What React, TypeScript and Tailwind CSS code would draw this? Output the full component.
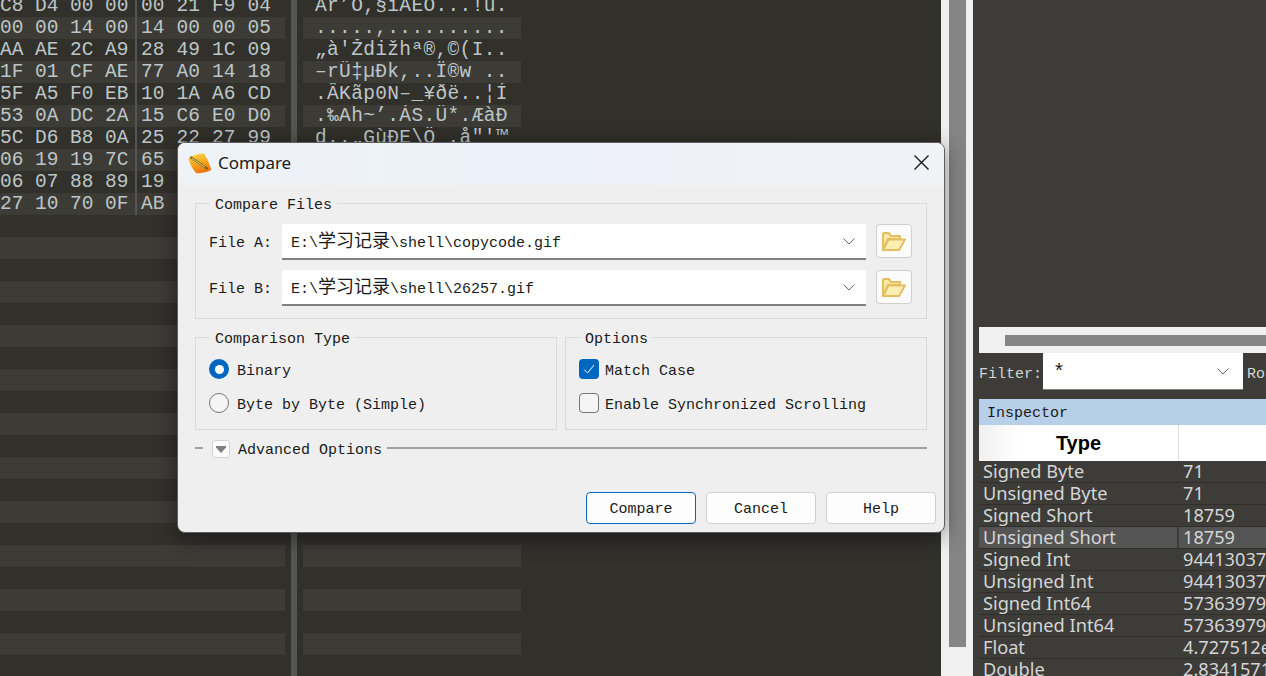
const hexRows = [
  ["C8", "D4", "00", "00", "00", "21", "F9", "04"],
  ["00", "00", "14", "00", "14", "00", "00", "05"],
  ["AA", "AE", "2C", "A9", "28", "49", "1C", "09"],
  ["1F", "01", "CF", "AE", "77", "A0", "14", "18"],
  ["5F", "A5", "F0", "EB", "10", "1A", "A6", "CD"],
  ["53", "0A", "DC", "2A", "15", "C6", "E0", "D0"],
  ["5C", "D6", "B8", "0A", "25", "22", "27", "99"],
  ["06", "19", "19", "7C", "65"],
  ["06", "07", "88", "89", "19"],
  ["27", "10", "70", "0F", "AB"],
];

const asciiRows = [
  "Ar’O,§iAEO...!ú.",
  ".....,..........",
  "„à'Ždižhª®,©(I..",
  "–rÜ‡µÐk,..Ï®w ..",
  ".ÂKãp0N–_¥ðë..¦Í",
  ".‰Ah~’.ÁS.Ü*.ÆàÐ",
  "d..„GùÐE\\Ö .å\"'™",
];

const inspectorRows = [
  ["Signed Byte", "71"],
  ["Unsigned Byte", "71"],
  ["Signed Short", "18759"],
  ["Unsigned Short", "18759"],
  ["Signed Int", "94413037"],
  ["Unsigned Int", "94413037"],
  ["Signed Int64", "57363979"],
  ["Unsigned Int64", "57363979"],
  ["Float", "4.727512e"],
  ["Double", "2.8341571"],
];

const mono = "font-['Liberation_Mono','Noto_Sans_CJK_SC',monospace]";
const rowCount = 32;

function Chevron() {
  return (
    <svg width="12" height="7" viewBox="0 0 12 7" fill="none">
      <path d="M0.5 0.5 L6 6 L11.5 0.5" stroke="#666" strokeWidth="1" />
    </svg>
  );
}

function FolderIcon() {
  return (
    <svg width="24" height="19" viewBox="0 0 24 19" fill="none">
      <path d="M1 18 V2 Q1 1 2 1 H7 L9 4 H18 V7 H6 L1 18 Z" fill="#f8e8a4" stroke="#e4bf62" strokeWidth="2" strokeLinejoin="round" />
      <path d="M1 18 L6.5 7.5 H23 L17 18 Z" fill="#fbefb4" stroke="#e4bf62" strokeWidth="2" strokeLinejoin="round" />
    </svg>
  );
}

function AppIcon() {
  return (
    <svg width="24" height="21" viewBox="0 0 24 21">
      <defs>
        <linearGradient id="leaf" x1="0.3" y1="0" x2="0.6" y2="1">
          <stop offset="0" stopColor="#fcd34a" />
          <stop offset="0.5" stopColor="#f9a51c" />
          <stop offset="1" stopColor="#ec6f10" />
        </linearGradient>
      </defs>
      <path d="M0.5 5.5 Q8 0 16 0.5 Q21 8 23.5 17 Q16 21 8 20 Q2 13 0.5 5.5 Z" fill="url(#leaf)" />
      <path d="M3 4.5 L19 15.5" stroke="#7a6420" strokeWidth="2.2" strokeLinecap="round" />
      <path d="M3.5 5 L17 14.2" stroke="#f8e88a" strokeWidth="0.9" />
    </svg>
  );
}

function FileRow({ label, prefix, suffix }: { label: string; prefix: string; suffix: string }) {
  return (
    <div className="flex items-start h-[36px]">
      <span className="w-[86px] h-[36px] pl-[13px] pt-[2px] leading-[36px] text-[15px] text-[#1a1a1a] whitespace-pre">{label}</span>
      <div className="w-[584px] h-[36px] bg-white border-b-2 border-[#808080] flex items-center pl-[9px] pr-[11px] rounded-t-[2px]">
        <span className="flex-1 pt-[6px] text-[15px] text-[#1a1a1a] whitespace-pre">
          {prefix}
          <span className="text-[18px] leading-none">学习记录</span>
          {suffix}
        </span>
        <Chevron />
      </div>
      <button className="ml-[10px] w-[36px] h-[34px] bg-[#fbfbfb] border border-[#d0d0d0] rounded-[4px] flex items-center justify-center">
        <FolderIcon />
      </button>
    </div>
  );
}

function GroupBox({ title, className, children }: { title: string; className: string; children: React.ReactNode }) {
  return (
    <fieldset className={`border border-[#d9d9d9] ${className}`}>
      <legend className="ml-[14px] px-[5px] h-[18px] pt-[3px] text-[15px] leading-[18px] text-[#1a1a1a]">{title}</legend>
      {children}
    </fieldset>
  );
}

function Radio({ checked, label }: { checked?: boolean; label: string }) {
  return (
    <div className="flex items-center h-[20px]">
      {checked ? (
        <span className="w-[20px] h-[20px] rounded-full bg-[#0067c0] flex items-center justify-center">
          <span className="w-[9px] h-[9px] rounded-full bg-white" />
        </span>
      ) : (
        <span className="w-[20px] h-[20px] rounded-full border border-[#767676] bg-[#f5f5f5]" />
      )}
      <span className="ml-[8px] pt-[6px] text-[15px] text-[#1a1a1a] whitespace-pre">{label}</span>
    </div>
  );
}

function Check({ checked, label }: { checked?: boolean; label: string }) {
  return (
    <div className="flex items-center h-[20px]">
      {checked ? (
        <span className="w-[20px] h-[20px] rounded-[4px] bg-[#0067c0] flex items-center justify-center">
          <svg width="12" height="10" viewBox="0 0 12 10" fill="none">
            <path d="M1 5.5 L4.5 9 L11 1" stroke="#fff" strokeWidth="1" />
          </svg>
        </span>
      ) : (
        <span className="w-[20px] h-[20px] rounded-[4px] border border-[#767676] bg-[#f5f5f5]" />
      )}
      <span className="ml-[6px] pt-[6px] text-[15px] text-[#1a1a1a] whitespace-pre">{label}</span>
    </div>
  );
}

function DialogButton({ label, primary }: { label: string; primary?: boolean }) {
  return (
    <button
      className={`w-[110px] h-[32px] pt-[4px] bg-[#fdfdfd] rounded-[4px] border text-[15px] text-[#1a1a1a] ${
        primary ? "border-[#0067c0]" : "border-[#d0d0d0]"
      }`}
    >
      {label}
    </button>
  );
}

function CompareDialog() {
  return (
    <div className={`absolute left-[177px] top-[142px] w-[768px] h-[391px] flex flex-col bg-[#efefef] border border-[#5f5f5f] rounded-[8px] overflow-hidden shadow-[0_4px_22px_rgba(0,0,0,0.45)] ${mono}`}>
      {/* title bar */}
      <div className="h-[42px] shrink-0 flex items-center bg-gradient-to-r from-[#eef3f7] via-[#edf1fa] to-[#f1f2f6] pl-[10px] pr-[15px] pb-[2px]">
        <AppIcon />
        <span className="ml-[6px] flex-1 text-[17px] text-[#1a1a1a] font-['Noto_Sans',sans-serif]">Compare</span>
        <svg width="15" height="15" viewBox="0 0 15 15" fill="none" className="-translate-y-[1px]">
          <path d="M0.5 0.5 L14.5 14.5 M14.5 0.5 L0.5 14.5" stroke="#1a1a1a" strokeWidth="1.4" />
        </svg>
      </div>

      <div className="flex-1 flex flex-col px-[17px]">
        <GroupBox title="Compare Files" className="mt-[9px] pt-[12px] pb-[12px]">
          <div className="flex flex-col gap-[10px]">
            <FileRow label="File A:" prefix="E:\" suffix="\shell\copycode.gif" />
            <FileRow label="File B:" prefix="E:\" suffix="\shell\26257.gif" />
          </div>
        </GroupBox>

        <div className="flex gap-[8px] mt-[9px]">
          <GroupBox title="Comparison Type" className="flex-1 pt-[13px] pb-[16px]">
            <div className="flex flex-col gap-[14px] pl-[13px]">
              <Radio checked label="Binary" />
              <Radio label="Byte by Byte (Simple)" />
            </div>
          </GroupBox>
          <GroupBox title="Options" className="flex-1 pt-[13px] pb-[16px]">
            <div className="flex flex-col gap-[14px] pl-[13px]">
              <Check checked label="Match Case" />
              <Check label="Enable Synchronized Scrolling" />
            </div>
          </GroupBox>
        </div>

        {/* advanced options */}
        <div className="flex items-center h-[18px] mt-[10px]">
          <span className="w-[8px] h-[2px] bg-[#a0a0a0] -translate-y-[1px]" />
          <span className="ml-[9px] w-[18px] h-[18px] bg-[#fbfbfb] border border-[#d4d4d4] rounded-[3px] flex items-center justify-center">
            <svg width="10" height="7" viewBox="0 0 10 7">
              <path d="M0 0 H10 V1.5 L5 7 L0 1.5 Z" fill="#808080" />
            </svg>
          </span>
          <span className="ml-[8px] pt-[4px] text-[15px] text-[#1a1a1a] whitespace-pre">Advanced Options</span>
          <span className="ml-[5px] flex-1 h-[2px] bg-[#a0a0a0] -translate-y-[1px]" />
        </div>

        <div className="mt-auto mb-[8px] -mr-[9px] flex justify-end gap-[10px]">
          <DialogButton primary label="Compare" />
          <DialogButton label="Cancel" />
          <DialogButton label="Help" />
        </div>
      </div>
    </div>
  );
}

export default function App() {
  return (
    <div className={`relative w-[1266px] h-[676px] overflow-hidden flex bg-[#31302b] ${mono}`}>
      {/* hex pane */}
      <div className="w-[285px] shrink-0 -mt-[5px]">
        {Array.from({ length: rowCount }).map((_, i) => (
          <div
            key={i}
            className={`h-[22px] flex items-center text-[19.5px] leading-[22px] text-[#bcc6c8] whitespace-pre ${
              i % 2 === 1 ? "bg-[#3c3b36]" : ""
            }`}
          >
            {hexRows[i] && (
              <>
                {hexRows[i].slice(0, 3).map((b, j) => (
                  <span key={j} className="w-[35px]">{b}</span>
                ))}
                <span className="w-[30px]">{hexRows[i][3]}</span>
                <span className="h-[22px] w-[6px] border-l-2 border-[#555]" />
                {hexRows[i].slice(4).map((b, j) => (
                  <span key={j} className="w-[35.5px]">{b}</span>
                ))}
              </>
            )}
          </div>
        ))}
      </div>

      <div className="w-[6px] ml-[6px] shrink-0 bg-[#555553]" />

      {/* ascii pane */}
      <div className="w-[218px] ml-[6px] shrink-0 -mt-[5px]">
        {Array.from({ length: rowCount }).map((_, i) => (
          <div
            key={i}
            className={`h-[22px] pl-[12px] text-[19.5px] tracking-[0.35px] leading-[22px] text-[#bcc6c8] whitespace-pre overflow-hidden ${
              i % 2 === 1 ? "bg-[#3c3b36]" : ""
            }`}
          >
            {asciiRows[i] ?? ""}
          </div>
        ))}
      </div>

      <div className="flex-1" />

      {/* vertical scrollbar */}
      <div className="w-[32px] shrink-0 bg-[#f0f0f0] pl-[8px]">
        <div className="w-[17px] h-[647px] bg-[#858585]" />
      </div>

      {/* right panel */}
      <div className="w-[293px] shrink-0 bg-[#3d3c38] pl-[6px] pt-[327px] overflow-hidden">
        <div className="h-[26px] bg-[#f0f0f0] pl-[26px] pt-[8px]">
          <div className="h-[11px] bg-[#858585]" />
        </div>
        <div className="h-[38px] flex items-start text-[15px] text-[#d2d5d6] whitespace-nowrap">
          <span className="w-[64px] leading-[44px]">Filter:</span>
          <div className="w-[200px] h-[37px] shrink-0 bg-white border-b border-[#808080] flex items-center pl-[10px] pr-[14px]">
            <span className="flex-1 text-[20px] pt-[3px] text-[#1a1a1a]">*</span>
            <Chevron />
          </div>
          <span className="ml-[4px] leading-[44px]">Ro</span>
        </div>
        <div className="mt-[8px] h-[26px] bg-[#b8cfe9] pl-[8px] text-[15px] leading-[30px] text-[#1a1a1a]">Inspector</div>
        <div className="h-[36px] flex bg-white font-['Liberation_Sans',sans-serif] text-[20px] font-bold text-black">
          <div className="w-[200px] border-r border-[#dcdcdc] flex items-center justify-center bg-gradient-to-r from-[#f0f0f0] to-white to-[20%]">Type</div>
        </div>
        {inspectorRows.map(([name, value], i) => (
          <div
            key={name}
            className="h-[22px] flex gap-[2px] border-b border-[#302f2c] font-['Noto_Sans',sans-serif] text-[18.2px] leading-[21px] text-[#d4d6d6] whitespace-nowrap"
          >
            <div className={`w-[198px] shrink-0 pl-[4px] ${i === 3 ? "bg-[#545454]" : "bg-[#3d3c38]"}`}>{name}</div>
            <div className={`flex-1 pl-[4px] ${i === 3 ? "bg-[#545454]" : "bg-[#3d3c38]"}`}>{value}</div>
          </div>
        ))}
      </div>

      <CompareDialog />
    </div>
  );
}
